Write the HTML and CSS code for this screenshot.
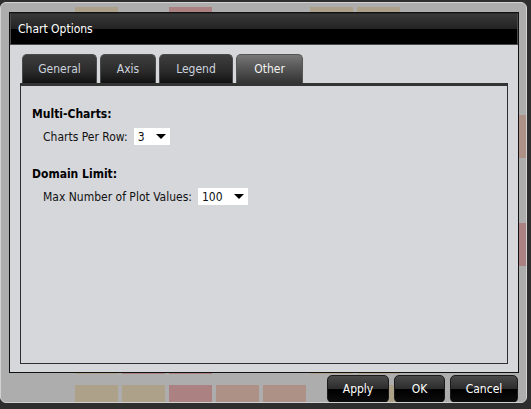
FILE: index.html
```html
<!DOCTYPE html>
<html lang="en">
<head>
  <meta charset="UTF-8" />
  <title>Chart Options</title>
  <link rel="stylesheet" href="styles.css">
</head>
<body>
  <div class="screen">
    <!-- page tiles seen through the modal frame -->
    <div class="tiles">
      <i class="tan"></i><i></i><i class="red"></i><i></i><i></i><i class="tan"></i><i class="tan"></i><i></i><i></i><i></i><i></i>
      <i></i><i></i><i></i><i></i><i></i><i></i><i></i><i></i><i></i><i></i><i></i>
      <i></i><i></i><i></i><i></i><i></i><i></i><i></i><i></i><i></i><i></i><i class="sal"></i>
      <i></i><i></i><i></i><i></i><i></i><i></i><i></i><i></i><i></i><i></i><i></i>
      <i></i><i></i><i></i><i></i><i></i><i></i><i></i><i></i><i></i><i></i><i class="red"></i>
      <i></i><i></i><i></i><i></i><i></i><i></i><i></i><i></i><i></i><i></i><i></i>
      <i class="tan"></i><i class="red"></i><i class="red"></i><i></i><i></i><i class="tan"></i><i class="tan"></i><i></i><i></i><i></i><i></i>
      <i class="tan"></i><i class="tan"></i><i class="red"></i><i class="sal"></i><i class="sal"></i><i></i><i class="tan"></i><i></i><i></i><i></i><i></i>
    </div>

    <div class="dialog">
      <div class="dialog-box">
        <div class="title-bar">Chart Options</div>
        <div class="dialog-body">
          <div class="tabs">
            <div class="tab tab-general">General</div>
            <div class="tab tab-axis">Axis</div>
            <div class="tab tab-legend">Legend</div>
            <div class="tab tab-other active">Other</div>
          </div>
          <div class="panel">
            <div class="section">
              <h3>Multi-Charts:</h3>
              <div class="field">
                <span>Charts Per Row:</span>
                <div class="select select-small">
                  <span>3</span>
                  <svg width="10" height="5" viewBox="0 0 10 5"><path d="M0 0h10L5 5z" fill="#000"/></svg>
                </div>
              </div>
            </div>
            <div class="section">
              <h3>Domain Limit:</h3>
              <div class="field">
                <span>Max Number of Plot Values:</span>
                <div class="select select-wide">
                  <span>100</span>
                  <svg width="10" height="5" viewBox="0 0 10 5"><path d="M0 0h10L5 5z" fill="#000"/></svg>
                </div>
              </div>
            </div>
          </div>
        </div>
      </div>
      <div class="buttons">
        <button class="btn btn-apply">Apply</button>
        <button class="btn btn-ok">OK</button>
        <button class="btn btn-cancel">Cancel</button>
      </div>
    </div>
  </div>
</body>
</html>
```

FILE: styles.css
```css
body {
  margin: 0;
  width: 531px;
  height: 409px;
  overflow: hidden;
  background: #2e2e2e;
  font-family: 'DejaVu Sans Condensed', 'DejaVu Sans', sans-serif;
  font-size: 12px;
  color: #000;
}

.screen {
  position: relative;
  margin-top: 2px;
  width: 527px;
  height: 401px;
  box-sizing: border-box;
  background: #adadad;
  border: 1px solid #d2d2d2;
  border-radius: 6px;
  overflow: hidden;
}

.tiles {
  display: grid;
  grid-template-columns: repeat(9, 43px) 17px 43px;
  grid-template-rows: repeat(8, 43px);
  column-gap: 4px;
  row-gap: 11px;
  margin: 4px 0 0 74px;
}

.tiles i.tan { background: #ada189; }
.tiles i.red { background: #ac8181; }
.tiles i.sal { background: #ad9187; }

.dialog {
  position: absolute;
  left: 8px;
  top: 9px;
  width: 510px;
}

.dialog-box {
  height: 361px;
  box-sizing: border-box;
  border: 1px solid #111;
  background: #d6d7db;
  display: flex;
  flex-direction: column;
}

.title-bar {
  height: 32px;
  box-sizing: border-box;
  border: 1px solid #4a4a4a;
  border-top-color: #2a2a2a;
  background: linear-gradient(#383838, #232323 50%, #000 50%, #000);
  color: #fff;
  padding-left: 7px;
  line-height: 30px;
}

.dialog-body {
  flex: 1;
  display: flex;
  flex-direction: column;
  padding: 9px 10px 8px 10px;
}

.tabs {
  display: flex;
  gap: 3px;
  margin-left: 2px;
  height: 29px;
}

.tab {
  box-sizing: border-box;
  border: 1px solid #4a4a4a;
  border-bottom: none;
  border-radius: 5px 5px 0 0;
  background: linear-gradient(#3e3e3e, #2a2a2a 60%, #111);
  color: #cdd3de;
  text-align: center;
  line-height: 28px;
}

.tab-general { width: 75px; }
.tab-axis { width: 56px; }
.tab-legend { width: 74px; }
.tab-other { width: 67px; }

.tab.active {
  background: linear-gradient(#777, #5a5a5a 40%, #333);
  border-color: #555;
  color: #f2f2f2;
}

.panel {
  flex: 1;
  border: 1px solid #2f2f2f;
  border-top: 3px solid #333;
  padding: 20px 11px 0 11px;
}

.section {
  margin-bottom: 21px;
}

.section h3 {
  margin: 0;
  font-size: 12px;
  font-weight: bold;
  line-height: 16px;
}

.field {
  display: flex;
  align-items: center;
  gap: 6px;
  margin: 6px 0 0 11px;
  color: #111;
}

.select {
  box-sizing: border-box;
  height: 17px;
  background: #fff;
  display: flex;
  align-items: center;
  justify-content: space-between;
  padding: 0 4px 0 4px;
}

.select-small { width: 36px; }
.select-wide { width: 50px; }

.buttons {
  display: flex;
  justify-content: flex-end;
  gap: 5px;
  margin: 2px 1px 0 0;
}

.btn {
  height: 28px;
  box-sizing: border-box;
  border: 1px solid #1a1a1a;
  border-radius: 5px;
  background: linear-gradient(#4a4a4a, #2c2c2c 50%, #000 52%, #0c0c0c);
  color: #fff;
  font-family: inherit;
  font-size: 12px;
  padding: 0;
}

.btn-apply { width: 62px; }
.btn-ok { width: 51px; }
.btn-cancel { width: 68px; }
```
